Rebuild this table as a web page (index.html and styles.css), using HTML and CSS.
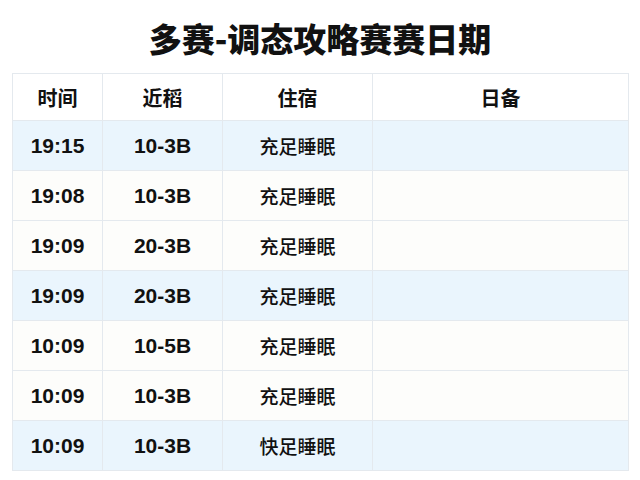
FILE: index.html
```html
<!DOCTYPE html>
<html lang="zh">
<head>
<meta charset="utf-8">
<link rel="stylesheet" href="styles.css">
</head>
<body>
<div class="page">
  <h1 class="title">多赛-调态攻略赛赛日期</h1>
  <table class="sched">
    <colgroup>
      <col class="c1"><col class="c2"><col class="c3"><col class="c4">
    </colgroup>
    <thead>
      <tr><th>时间</th><th>近稻</th><th>住宿</th><th>日备</th></tr>
    </thead>
    <tbody>
      <tr class="hl"><td class="num">19:15</td><td class="num">10-3B</td><td class="cjk">充足睡眠</td><td></td></tr>
      <tr><td class="num">19:08</td><td class="num">10-3B</td><td class="cjk">充足睡眠</td><td></td></tr>
      <tr><td class="num">19:09</td><td class="num">20-3B</td><td class="cjk">充足睡眠</td><td></td></tr>
      <tr class="hl"><td class="num">19:09</td><td class="num">20-3B</td><td class="cjk">充足睡眠</td><td></td></tr>
      <tr><td class="num">10:09</td><td class="num">10-5B</td><td class="cjk">充足睡眠</td><td></td></tr>
      <tr><td class="num">10:09</td><td class="num">10-3B</td><td class="cjk">充足睡眠</td><td></td></tr>
      <tr class="hl"><td class="num">10:09</td><td class="num">10-3B</td><td class="cjk">快足睡眠</td><td></td></tr>
    </tbody>
  </table>
</div>
</body>
</html>
```

FILE: styles.css
```css
html, body {
  margin: 0;
  padding: 0;
  background: #ffffff;
}
.page {
  width: 640px;
  height: 480px;
  overflow: hidden;
  font-family: "Liberation Sans", "Noto Sans CJK SC", sans-serif;
  color: #111111;
}
.title {
  margin: 0;
  height: 73px;
  box-sizing: border-box;
  padding-top: 15px;
  font-family: "Noto Sans CJK SC", sans-serif;
  font-size: 33px;
  line-height: 46px;
  font-weight: 900;
  text-align: center;
  letter-spacing: 0;
}
.sched {
  margin-left: 12px;
  width: 616px;
  border-collapse: collapse;
  table-layout: fixed;
}
.c1 { width: 90px; }
.c2 { width: 120px; }
.c3 { width: 150px; }
.c4 { width: 256px; }
.sched th, .sched td {
  border: 1px solid #e4e9ee;
  padding: 0;
  text-align: center;
  vertical-align: middle;
}
.sched th {
  height: 46px;
  font-family: "Noto Sans CJK SC", sans-serif;
  font-size: 20px;
  font-weight: 700;
  background: #ffffff;
}
.sched td {
  height: 49px;
  background: #fdfdfb;
}
.sched tr.hl td {
  background: #eaf5fd;
}
.num {
  font-family: "Liberation Sans", sans-serif;
  font-size: 21px;
  font-weight: 700;
}
.cjk {
  font-family: "Noto Sans CJK SC", sans-serif;
  font-size: 19px;
  font-weight: 500;
}
```
